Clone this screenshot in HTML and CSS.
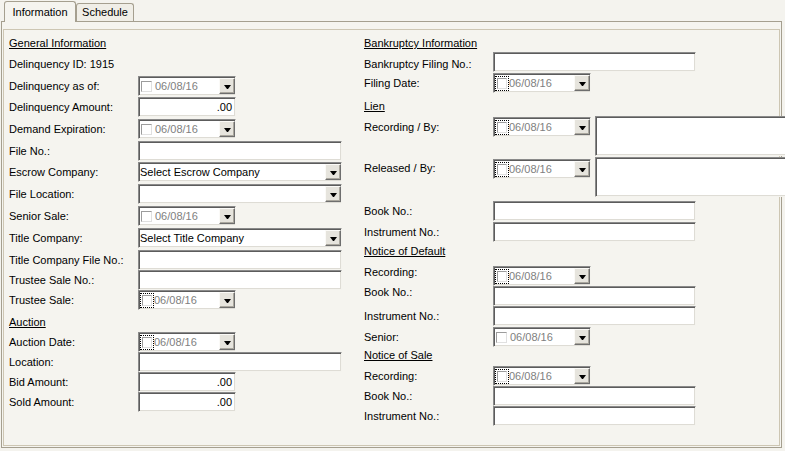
FILE: index.html
```html
<!DOCTYPE html>
<html>
<head>
<meta charset="utf-8">
<link rel="stylesheet" href="styles.css">
</head>
<body>
<div class="tabs">
  <div class="tab active">Information</div>
  <div class="tab">Schedule</div>
</div>
<div class="panel">
  <div class="page">
    <div class="col">
      <div class="row h">General Information</div>
      <div class="row mt1"><span>Delinquency ID: 1915</span></div>
      <div class="row mt2"><span class="lbl">Delinquency as of:</span><div class="field date w98"><span class="cb"></span><span class="dt">06/08/16</span><span class="btn"><span class="tri"></span></span></div></div>
      <div class="row mt1"><span class="lbl">Delinquency Amount:</span><div class="field w98 num">.00</div></div>
      <div class="row mt2"><span class="lbl">Demand Expiration:</span><div class="field date w98"><span class="cb"></span><span class="dt">06/08/16</span><span class="btn"><span class="tri"></span></span></div></div>
      <div class="row mt2"><span class="lbl">File No.:</span><div class="field wl"></div></div>
      <div class="row mt1"><span class="lbl">Escrow Company:</span><div class="field sel wl"><span class="st">Select Escrow Company</span><span class="btn"><span class="tri"></span></span></div></div>
      <div class="row mt2"><span class="lbl">File Location:</span><div class="field sel wl"><span class="st"></span><span class="btn"><span class="tri"></span></span></div></div>
      <div class="row mt2"><span class="lbl">Senior Sale:</span><div class="field date w98"><span class="cb"></span><span class="dt">06/08/16</span><span class="btn"><span class="tri"></span></span></div></div>
      <div class="row mt2"><span class="lbl">Title Company:</span><div class="field sel wl"><span class="st">Select Title Company</span><span class="btn"><span class="tri"></span></span></div></div>
      <div class="row mt2"><span class="lbl">Title Company File No.:</span><div class="field wl"></div></div>
      <div class="row"><span class="lbl">Trustee Sale No.:</span><div class="field wl"></div></div>
      <div class="row"><span class="lbl">Trustee Sale:</span><div class="field date w98"><span class="cb focus"></span><span class="dt">06/08/16</span><span class="btn"><span class="tri"></span></span></div></div>
      <div class="row h mt2">Auction</div>
      <div class="row"><span class="lbl">Auction Date:</span><div class="field date w98"><span class="cb focus"></span><span class="dt">06/08/16</span><span class="btn"><span class="tri"></span></span></div></div>
      <div class="row"><span class="lbl">Location:</span><div class="field wl"></div></div>
      <div class="row"><span class="lbl">Bid Amount:</span><div class="field w98 num">.00</div></div>
      <div class="row"><span class="lbl">Sold Amount:</span><div class="field w98 num">.00</div></div>
    </div>
    <div class="col">
      <div class="row h">Bankruptcy Information</div>
      <div class="row mtm1"><span class="lbl dn2">Bankruptcy Filing No.:</span><div class="field wr"></div></div>
      <div class="row mt1"><span class="lbl">Filing Date:</span><div class="field date w98"><span class="cb focus"></span><span class="dt">06/08/16</span><span class="btn"><span class="tri"></span></span></div></div>
      <div class="row h mt3">Lien</div>
      <div class="row tall"><span class="lbl t1">Recording / By:</span><div class="field date w98 t1"><span class="cb focus"></span><span class="dt">06/08/16</span><span class="btn"><span class="tri"></span></span></div><div class="field ta"></div></div>
      <div class="row tall mt1"><span class="lbl t1">Released / By:</span><div class="field date w98 t2"><span class="cb focus"></span><span class="dt">06/08/16</span><span class="btn"><span class="tri"></span></span></div><div class="field ta"></div></div>
      <div class="row mt4"><span class="lbl">Book No.:</span><div class="field wr"></div></div>
      <div class="row mt1"><span class="lbl">Instrument No.:</span><div class="field wr"></div></div>
      <div class="row h mtm1">Notice of Default</div>
      <div class="row mt5"><span class="lbl up4">Recording:</span><div class="field date w98"><span class="cb focus"></span><span class="dt">06/08/16</span><span class="btn"><span class="tri"></span></span></div></div>
      <div class="row"><span class="lbl up4">Book No.:</span><div class="field wr"></div></div>
      <div class="row"><span class="lbl">Instrument No.:</span><div class="field wr"></div></div>
      <div class="row mt1"><span class="lbl">Senior:</span><div class="field date w98"><span class="cb"></span><span class="dt">06/08/16</span><span class="btn"><span class="tri"></span></span></div></div>
      <div class="row h mtm2">Notice of Sale</div>
      <div class="row mt1"><span class="lbl">Recording:</span><div class="field date w98"><span class="cb focus"></span><span class="dt">06/08/16</span><span class="btn"><span class="tri"></span></span></div></div>
      <div class="row"><span class="lbl">Book No.:</span><div class="field wr"></div></div>
      <div class="row"><span class="lbl">Instrument No.:</span><div class="field wr"></div></div>
    </div>
  </div>
</div>
</body>
</html>
```
FILE: styles.css
```css
html, body {
  margin: 0;
  padding: 0;
}
body {
  width: 785px;
  height: 451px;
  overflow: hidden;
  background: #f4f3ee;
  font-family: "Liberation Sans", Arial, sans-serif;
  font-size: 11px;
  color: #000;
}
.tabs {
  display: flex;
  align-items: flex-end;
  height: 22px;
  padding-left: 4px;
  margin-bottom: -1px;
  position: relative;
  z-index: 2;
}
.tab {
  box-sizing: border-box;
  width: 58px;
  height: 18px;
  line-height: 17px;
  text-align: center;
  border: 1px solid #a59f8f;
  border-bottom: none;
  border-radius: 3px 3px 0 0;
  background: #f0eee7;
  margin-bottom: 1px;
}
.tab.active {
  width: 72px;
  height: 21px;
  line-height: 20px;
  background: #f5f4ef;
  margin-bottom: 0;
}
.panel {
  box-sizing: border-box;
  margin-left: 1px;
  width: 781px;
  height: 427px;
  border: 1px solid #a59f8f;
  padding: 7px 1px 1px 1px;
  background: #f5f4ef;
  position: relative;
  z-index: 1;
}
.page {
  box-sizing: border-box;
  height: 100%;
  border: 1px solid #cdc6b3;
  padding: 3px 0 0 5px;
  display: grid;
  grid-template-columns: 355px 1fr;
  align-items: start;
}
.col {
  display: flex;
  flex-direction: column;
}
.row {
  display: flex;
  align-items: center;
  height: 20px;
  flex: none;
  white-space: nowrap;
}
.row.tall {
  height: 40px;
  align-items: flex-start;
}
.h {
  text-decoration: underline;
}
.lbl {
  width: 129px;
  flex: none;
  line-height: 20px;
}
.lbl.dn2 { padding-top: 4px; }
.lbl.up4 { padding-bottom: 8px; }
.t1 { margin-top: 1px; }
.t2 { margin-top: 2px; }
.mt1 { margin-top: 1px; }
.mt2 { margin-top: 2px; }
.mt3 { margin-top: 3px; }
.mt4 { margin-top: 4px; }
.mt5 { margin-top: 5px; }
.mtm1 { margin-top: -1px; }
.mtm2 { margin-top: -2px; }

.field {
  box-sizing: border-box;
  height: 20px;
  flex: none;
  background: #fff;
  border: 1px solid;
  border-color: #8a8a8a #f4f3ee #f4f3ee #8a8a8a;
  box-shadow: inset 1px 1px 0 #5c5c5c, inset -1px -1px 0 #dedcd5;
}
.w98 { width: 98px; }
.wl { width: 204px; }
.wr { width: 203px; }
.num {
  text-align: right;
  line-height: 18px;
  padding-right: 3px;
}
.ta {
  width: 196px;
  height: 40px;
  margin-left: 4px;
}
.date, .sel {
  display: flex;
  align-items: center;
}
.cb {
  box-sizing: border-box;
  width: 11px;
  height: 11px;
  margin-left: 2px;
  margin-right: 3px;
  border: 1px solid;
  border-color: #9c9c9c #e0e0e0 #e0e0e0 #9c9c9c;
  background: #fff;
  flex: none;
}
.cb.focus {
  width: 10px;
  height: 11px;
  margin-left: 3px;
  margin-right: 2px;
  outline: 1px dotted #000;
  outline-offset: 1px;
}
.dt {
  color: #808080;
}
.st {
  padding-left: 1px;
  flex: 1;
}
.btn {
  box-sizing: border-box;
  margin-left: auto;
  width: 16px;
  height: 16px;
  flex: none;
  background: #e6e4dd;
  border: 1px solid;
  border-color: #fbfaf7 #6e6e6e #6e6e6e #fbfaf7;
  box-shadow: inset -1px -1px 0 #aaa79e;
  display: flex;
  align-items: center;
  justify-content: center;
}
.tri {
  width: 1px;
  height: 0;
  border-left: 3px solid transparent;
  border-right: 3px solid transparent;
  border-top: 4px solid #000;
  margin-top: 1px;
}
```
